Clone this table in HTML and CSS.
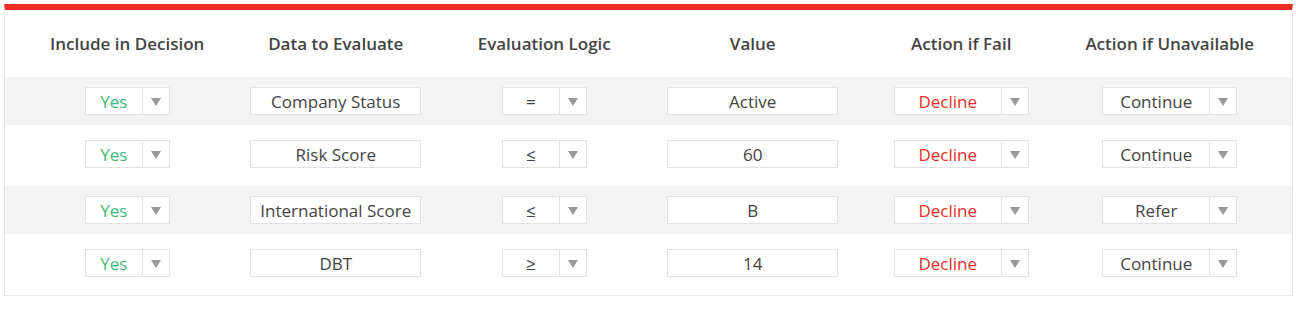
FILE: index.html
```html
<!DOCTYPE html>
<html lang="en">
<head>
  <meta charset="UTF-8" />
  <title>Decision Rules</title>
  <link rel="stylesheet" href="styles.css">
</head>
<body>
  <div class="rules">
    <div class="rules-head">
      <div>Include in Decision</div>
      <div>Data to Evaluate</div>
      <div>Evaluation Logic</div>
      <div>Value</div>
      <div>Action if Fail</div>
      <div>Action if Unavailable</div>
    </div>

    <div class="rule odd">
      <div class="cell"><div class="select short"><span class="sel-text yes">Yes</span><span class="sel-arrow"></span></div></div>
      <div class="cell"><div class="field">Company Status</div></div>
      <div class="cell"><div class="select short"><span class="sel-text">=</span><span class="sel-arrow"></span></div></div>
      <div class="cell"><div class="field">Active</div></div>
      <div class="cell"><div class="select mid"><span class="sel-text fail">Decline</span><span class="sel-arrow"></span></div></div>
      <div class="cell"><div class="select mid"><span class="sel-text">Continue</span><span class="sel-arrow"></span></div></div>
    </div>

    <div class="rule even">
      <div class="cell"><div class="select short"><span class="sel-text yes">Yes</span><span class="sel-arrow"></span></div></div>
      <div class="cell"><div class="field">Risk Score</div></div>
      <div class="cell"><div class="select short"><span class="sel-text">&le;</span><span class="sel-arrow"></span></div></div>
      <div class="cell"><div class="field">60</div></div>
      <div class="cell"><div class="select mid"><span class="sel-text fail">Decline</span><span class="sel-arrow"></span></div></div>
      <div class="cell"><div class="select mid"><span class="sel-text">Continue</span><span class="sel-arrow"></span></div></div>
    </div>

    <div class="rule odd">
      <div class="cell"><div class="select short"><span class="sel-text yes">Yes</span><span class="sel-arrow"></span></div></div>
      <div class="cell"><div class="field">International Score</div></div>
      <div class="cell"><div class="select short"><span class="sel-text">&le;</span><span class="sel-arrow"></span></div></div>
      <div class="cell"><div class="field">B</div></div>
      <div class="cell"><div class="select mid"><span class="sel-text fail">Decline</span><span class="sel-arrow"></span></div></div>
      <div class="cell"><div class="select mid"><span class="sel-text">Refer</span><span class="sel-arrow"></span></div></div>
    </div>

    <div class="rule even">
      <div class="cell"><div class="select short"><span class="sel-text yes">Yes</span><span class="sel-arrow"></span></div></div>
      <div class="cell"><div class="field">DBT</div></div>
      <div class="cell"><div class="select short"><span class="sel-text">&ge;</span><span class="sel-arrow"></span></div></div>
      <div class="cell"><div class="field">14</div></div>
      <div class="cell"><div class="select mid"><span class="sel-text fail">Decline</span><span class="sel-arrow"></span></div></div>
      <div class="cell"><div class="select mid"><span class="sel-text">Continue</span><span class="sel-arrow"></span></div></div>
    </div>
  </div>
</body>
</html>
```

FILE: styles.css
```css
* {
  box-sizing: border-box;
  margin: 0;
  padding: 0;
}

body {
  margin: 4px 3px 4px 4px;
  font-family: "Open Sans", sans-serif;
  color: #444;
  background: #fff;
}

.rules {
  border: 1px solid #e6e6e6;
  border-top: 6px solid #ee2e24;
}

.rules-head,
.rule {
  display: grid;
  grid-template-columns: repeat(6, 1fr);
  padding: 0 18px;
}

.rules-head {
  height: 67px;
  align-items: center;
  text-align: center;
  font-size: 17px;
  font-weight: 600;
  color: #444;
}

.rule.odd {
  background: #f3f3f3;
  padding-top: 10px;
  padding-bottom: 10px;
}

.rule.even {
  padding-top: 15px;
  padding-bottom: 18px;
}

.cell {
  display: flex;
  justify-content: center;
}

.field,
.select {
  height: 28px;
  background: #fff;
  border: 1px solid #e2e2e2;
  font-size: 17px;
  line-height: 28px;
  color: #444;
}

.field {
  width: 171px;
  text-align: center;
}

.select {
  display: flex;
}

.select.short {
  width: 85px;
}

.select.mid {
  width: 135px;
}

.sel-text {
  flex: 1;
  text-align: center;
  border-right: 1px solid #e2e2e2;
}

.sel-text.yes {
  color: #3fba77;
}

.sel-text.fail {
  color: #ea2e27;
}

/* dropdown caret */
.sel-arrow {
  width: 26px;
  position: relative;
}

.sel-arrow::after {
  content: "";
  position: absolute;
  left: 8px;
  top: 10px;
  border-left: 5px solid transparent;
  border-right: 5px solid transparent;
  border-top: 8px solid #999;
}
```
